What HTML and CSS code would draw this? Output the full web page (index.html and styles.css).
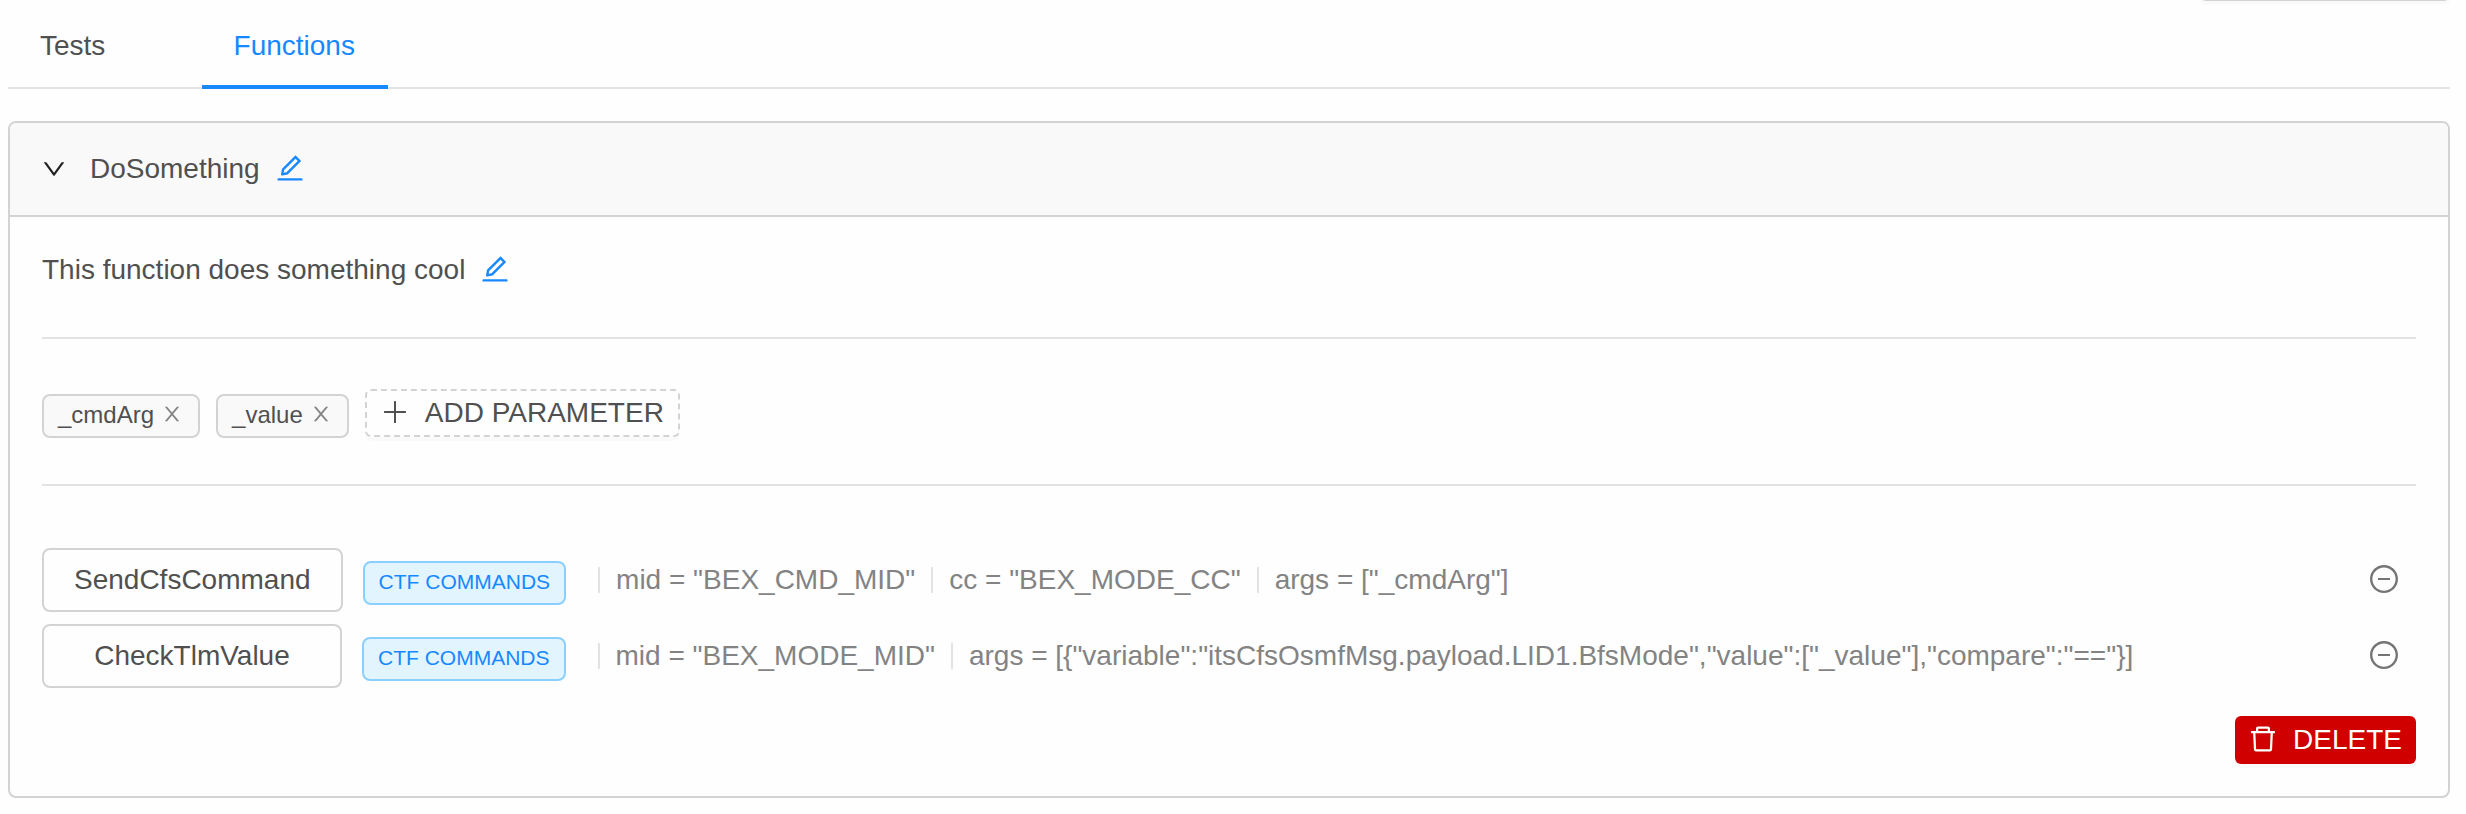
FILE: index.html
```html
<!DOCTYPE html>
<html lang="en">
<head>
<meta charset="utf-8">
<title>Functions</title>
<link rel="stylesheet" href="styles.css">
</head>
<body>
<svg class="defs" width="0" height="0">
  <symbol id="edit" viewBox="64 64 896 896"><path d="M257.7 752c2 0 4-.2 6-.5L431.9 722c2-.4 3.900-1.300 5.300-2.800l423.900-423.900a9.960 9.960 0 000-14.100L694.900 114.900c-1.900-1.900-4.400-2.900-7.100-2.900s-5.200 1-7.100 2.900L256.800 538.800c-1.500 1.500-2.400 3.300-2.800 5.300l-29.500 168.200a33.500 33.500 0 009.400 29.800c6.600 6.400 14.900 9.900 23.800 9.900zm67.400-174.400L687.800 215l73.300 73.300-362.700 362.600-88.900 15.700 15.600-89zM880 836H144c-17.700 0-32 14.300-32 32v36c0 4.400 3.600 8 8 8h784c4.400 0 8-3.600 8-8v-36c0-17.700-14.300-32-32-32z"/></symbol>
  <symbol id="down" viewBox="64 64 896 896"><path d="M884 256h-75c-5.100 0-9.900 2.500-12.900 6.600L512 654.200 227.900 262.600c-3-4.100-7.800-6.600-12.900-6.600h-75c-6.500 0-10.300 7.400-6.500 12.700l352.600 486.100c12.800 17.600 39 17.600 51.700 0l352.600-486.100c3.900-5.300.1-12.700-6.400-12.700z"/></symbol>
  <symbol id="close" viewBox="64 64 896 896"><path d="M563.8 512l262.500-312.900c4.400-5.200.7-13.100-6.100-13.100h-79.800c-4.700 0-9.200 2.100-12.300 5.700L511.600 449.800 295.100 191.700c-3-3.600-7.500-5.700-12.300-5.700H203c-6.800 0-10.500 7.900-6.100 13.100L459.400 512 196.900 824.900A7.950 7.950 0 00203 838h79.800c4.700 0 9.200-2.100 12.300-5.700l216.500-258.100 216.500 258.100c3 3.600 7.500 5.700 12.300 5.700h79.800c6.800 0 10.500-7.900 6.100-13.100L563.800 512z"/></symbol>
  <symbol id="plus" viewBox="64 64 896 896"><path d="M488 160h48q8 0 8 8v688q0 8-8 8h-48q-8 0-8-8V168q0-8 8-8z"/><path d="M168 480h688q8 0 8 8v48q0 8-8 8H168q-8 0-8-8v-48q0-8 8-8z"/></symbol>
  <symbol id="minus" viewBox="64 64 896 896"><path d="M696 480H328c-4.400 0-8 3.600-8 8v48c0 4.400 3.600 8 8 8h368c4.400 0 8-3.600 8-8v-48c0-4.400-3.600-8-8-8z"/><path d="M512 64C264.600 64 64 264.600 64 512s200.600 448 448 448 448-200.600 448-448S759.400 64 512 64zm0 820c-205.400 0-372-166.600-372-372s166.600-372 372-372 372 166.600 372 372-166.600 372-372 372z"/></symbol>
  <symbol id="trash" viewBox="64 64 896 896"><path d="M360 184h-8c4.400 0 8-3.600 8-8v8h304v-8c0 4.400 3.600 8 8 8h-8v72h72v-80c0-35.300-28.700-64-64-64H352c-35.300 0-64 28.700-64 64v80h72v-72zm504 72H160c-17.700 0-32 14.300-32 32v32c0 4.400 3.600 8 8 8h60.400l24.700 523c1.600 34.100 29.800 61 63.900 61h454c34.200 0 62.300-26.800 63.900-61l24.700-523H888c4.400 0 8-3.600 8-8v-32c0-17.700-14.300-32-32-32zM731.300 840H292.700l-24.200-512h487l-24.200 512z"/></symbol>
</svg>
<div class="toolbar"><div class="toolbar-button"></div></div>
<main class="page">
  <nav class="tabs">
    <a class="tab">Tests</a>
    <a class="tab tab-active">Functions</a>
  </nav>
  <section class="panel">
    <header class="panel-header">
      <svg class="icon-down"><use href="#down"/></svg>
      <span>DoSomething</span>
      <svg class="icon-edit"><use href="#edit"/></svg>
    </header>
    <div class="panel-body">
      <div class="description">
        <span>This function does something cool</span>
        <svg class="icon-edit"><use href="#edit"/></svg>
      </div>
      <div class="params">
        <span class="tag">_cmdArg<svg class="icon-close"><use href="#close"/></svg></span>
        <span class="tag">_value<svg class="icon-close"><use href="#close"/></svg></span>
        <button class="button button-dashed"><svg class="icon-btn"><use href="#plus"/></svg><span>ADD PARAMETER</span></button>
      </div>
      <div class="steps">
        <div class="step">
          <div class="command">SendCfsCommand</div>
          <span class="badge">CTF COMMANDS</span>
          <div class="args"><span>mid = "BEX_CMD_MID"</span><span>cc = "BEX_MODE_CC"</span><span>args = ["_cmdArg"]</span></div>
          <svg class="icon-minus"><use href="#minus"/></svg>
        </div>
        <div class="step">
          <div class="command">CheckTlmValue</div>
          <span class="badge">CTF COMMANDS</span>
          <div class="args"><span>mid = "BEX_MODE_MID"</span><span>args = [{"variable":"itsCfsOsmfMsg.payload.LID1.BfsMode","value":["_value"],"compare":"=="}]</span></div>
          <svg class="icon-minus"><use href="#minus"/></svg>
        </div>
      </div>
      <div class="footer">
        <button class="button button-danger"><svg class="icon-btn"><use href="#trash"/></svg><span>DELETE</span></button>
      </div>
    </div>
  </section>
</main>
</body>
</html>
```
FILE: styles.css
```css
* { box-sizing: border-box; }
body {
  margin: 0;
  height: 814px;
  overflow: hidden;
  background: #fefefe;
  color: #505050;
  font: 28px/44px "Liberation Sans", Arial, sans-serif;
}
svg { display: block; fill: currentColor; flex: none; }
.defs { position: absolute; }
.toolbar { display: flex; justify-content: flex-end; height: 1px; padding-right: 16px; }
.toolbar-button {
  width: 250px;
  height: 48px;
  margin-top: -47px;
  border: 2px solid #d3d3d3;
  border-radius: 6px;
  box-shadow: 0 4px 0 rgba(0, 0, 0, .015);
  flex: none;
}
.page { padding: 0 16px 0 8px; }
.tabs {
  display: flex;
  gap: 64.2px;
  height: 88px;
  border-bottom: 2px solid #e3e3e3;
}
.tab { height: 88px; padding: 23px 32px 0; }
.tab-active { padding-right: 33px; color: #1788ff; border-bottom: 4px solid #1788ff; }
.panel {
  height: 677px;
  margin-top: 32px;
  border: 2px solid #d3d3d3;
  border-radius: 8px;
  overflow: hidden;
}
.panel-header {
  display: flex;
  align-items: center;
  height: 94px;
  padding-left: 32px;
  background: #f9f9f9;
  border-bottom: 2px solid #d3d3d3;
}
.icon-down { width: 24px; height: 24px; margin-right: 24px; color: #222; }
.icon-edit { width: 28px; height: 28px; margin: 0 0 2px 16px; color: #1788ff; }
.panel-body { padding: 32px 32px 0; }
.description {
  display: flex;
  align-items: center;
  height: 90px;
  padding-bottom: 46px;
  border-bottom: 2px solid #e3e3e3;
}
.params {
  display: flex;
  align-items: flex-start;
  gap: 16px;
  height: 147px;
  padding-top: 50px;
  border-bottom: 2px solid #e3e3e3;
}
.tag {
  display: flex;
  align-items: center;
  height: 44px;
  margin-top: 5px;
  padding: 0 16px 2px 14px;
  font-size: 24px;
  line-height: 38px;
  background: #f9f9f9;
  border: 2px solid #d3d3d3;
  border-radius: 8px;
}
.icon-close { width: 20px; height: 20px; margin: 0 0 2px 8px; color: #858585; }
.button {
  display: flex;
  align-items: center;
  gap: 16px;
  height: 48px;
  padding: 0 14px;
  font: inherit;
  line-height: 44px;
  color: inherit;
  border: 2px solid #d3d3d3;
  border-radius: 6px;
  box-shadow: 0 4px 0 rgba(0, 0, 0, .015);
}
.button-dashed { background: #fefefe; border-style: dashed; }
.button-danger { background: #d00000; border: 0; color: #fff; }
.icon-btn { width: 28px; height: 28px; margin-bottom: 2px; }
.steps { display: grid; gap: 12px; padding-top: 62px; }
.step { display: flex; align-items: center; height: 64px; padding-right: 18px; }
.command {
  height: 64px;
  min-width: 300px;
  padding: 0 30px;
  line-height: 60px;
  text-align: center;
  border: 2px solid #d3d3d3;
  border-radius: 8px;
}
.badge {
  height: 44px;
  margin: 6px 16px 0 20px;
  padding: 0 14px;
  font-size: 21px;
  line-height: 38px;
  color: #1788ff;
  background: #e2f5ff;
  border: 2px solid #89cfff;
  border-radius: 8px;
}
.args { display: flex; flex: 1; color: #838383; white-space: nowrap; }
.args span { display: flex; align-items: center; }
.args span::before {
  content: "";
  width: 2px;
  height: 26px;
  margin: 0 16px;
  background: #e3e3e3;
}
.icon-minus { width: 28px; height: 28px; margin-bottom: 2px; color: #757575; }
.footer { display: flex; justify-content: flex-end; margin-top: 28px; }
```
